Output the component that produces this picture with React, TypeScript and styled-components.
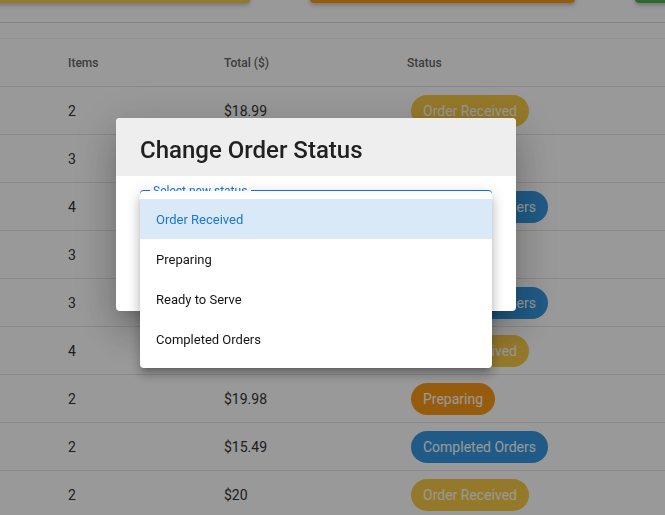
import React from 'react';
import styled, { createGlobalStyle } from 'styled-components';

type Status = 'Order Received' | 'Preparing' | 'Ready to Serve' | 'Completed Orders';

interface OrderRow {
  items: number;
  total: string;
  status: Status;
}

const statusColors: Record<Status, string> = {
  'Order Received': '#f8ca47',
  Preparing: '#fb9a17',
  'Ready to Serve': '#4caf50',
  'Completed Orders': '#3598e0',
};

const rows: OrderRow[] = [
  { items: 2, total: '$18.99', status: 'Order Received' },
  { items: 3, total: '$24.50', status: 'Preparing' },
  { items: 4, total: '$31.97', status: 'Completed Orders' },
  { items: 3, total: '$22.47', status: 'Preparing' },
  { items: 3, total: '$27.99', status: 'Completed Orders' },
  { items: 4, total: '$35.96', status: 'Order Received' },
  { items: 2, total: '$19.98', status: 'Preparing' },
  { items: 2, total: '$15.49', status: 'Completed Orders' },
  { items: 2, total: '$20', status: 'Order Received' },
];

const options: Status[] = ['Order Received', 'Preparing', 'Ready to Serve', 'Completed Orders'];

const GlobalStyle = createGlobalStyle`
  html, body {
    margin: 0;
    background: #ffffff;
    overflow: hidden;
    font-family: Roboto, "Liberation Sans", Arial, sans-serif;
  }
`;

const Page = styled.div`
  width: 665px;
  height: 515px;
  overflow: hidden;
`;

const FilterBar = styled.div`
  display: flex;
  gap: 60px;
  margin: -37px 0 0 -15px;
`;

const FilterButton = styled.div<{ $color: string }>`
  flex: 0 0 265px;
  height: 40px;
  border-radius: 4px;
  background: ${(p) => p.$color};
  box-shadow: 0 2px 4px rgba(0, 0, 0, 0.25);
`;

const TableTop = styled.div`
  margin-top: 19px;
  height: 15px;
  border-top: 1px solid #dcdcdc;
  border-bottom: 1px solid #f3f3f3;
`;

const Row = styled.div`
  display: grid;
  grid-template-columns: 156px 183px 1fr;
  align-items: center;
  height: 47px;
  padding-left: 52px;
  border-bottom: 1px solid #e4e4e4;
`;

const HeadCell = styled.div`
  padding-left: 16px;
  font-size: 12px;
  font-weight: 500;
  color: #666666;
`;

const Cell = styled.div`
  padding-left: 16px;
  font-size: 14px;
  color: #333333;
`;

const Badge = styled.span<{ $color: string }>`
  display: inline-flex;
  align-items: center;
  height: 32px;
  margin-left: 4px;
  padding: 0 12px;
  border-radius: 16px;
  background: ${(p) => p.$color};
  color: #ffffff;
  font-size: 14px;
`;

const Backdrop = styled.div`
  position: fixed;
  inset: 0;
  background: rgba(0, 0, 0, 0.4);
  display: flex;
  align-items: flex-start;
  padding: 118px 0 0 116px;
`;

const Dialog = styled.div`
  width: 400px;
  background: #ffffff;
  border-radius: 4px;
  box-shadow: 0 11px 15px -7px rgba(0, 0, 0, 0.2), 0 24px 38px 3px rgba(0, 0, 0, 0.14),
    0 9px 46px 8px rgba(0, 0, 0, 0.12);
`;

const DialogTitle = styled.h2`
  margin: 0;
  padding: 19px 24px 13px;
  height: 26px;
  line-height: 26px;
  background: #eeeeee;
  border-radius: 4px 4px 0 0;
  font-size: 24px;
  font-weight: 500;
  color: #212121;
`;

const DialogBody = styled.div`
  padding: 14px 24px 12px;
`;

const SelectField = styled.div`
  position: relative;
  height: 52px;
  border: 2px solid #1976d2;
  border-radius: 4px;
`;

const FieldLabel = styled.span`
  position: absolute;
  top: -9px;
  left: 8px;
  padding: 0 4px 0 3px;
  background: #ffffff;
  font-size: 12px;
  line-height: 16px;
  color: #1976d2;
`;

const Menu = styled.ul`
  position: absolute;
  top: -1px;
  left: -2px;
  right: -2px;
  margin: 0;
  padding: 8px 0 9px;
  list-style: none;
  background: #ffffff;
  border-radius: 4px;
  box-shadow: 0 5px 5px -3px rgba(0, 0, 0, 0.2), 0 8px 10px 1px rgba(0, 0, 0, 0.14),
    0 3px 14px 2px rgba(0, 0, 0, 0.12);
  z-index: 2;
`;

const MenuItem = styled.li<{ $selected?: boolean }>`
  display: flex;
  align-items: center;
  height: 40px;
  padding: 0 16px;
  font-size: 13px;
  font-weight: 400;
  color: ${(p) => (p.$selected ? '#1976d2' : 'rgba(0, 0, 0, 0.92)')};
  background: ${(p) => (p.$selected ? 'rgba(25, 118, 210, 0.16)' : 'transparent')};
`;

const DialogActions = styled.div`
  display: flex;
  justify-content: flex-end;
  gap: 8px;
  padding: 8px 24px 9px;
`;

const TextButton = styled.button`
  height: 36px;
  padding: 0 8px;
  border: none;
  background: none;
  font-family: inherit;
  font-size: 14px;
  font-weight: 500;
  color: #1976d2;
  text-transform: uppercase;
`;

export default function App() {
  return (
    <Page>
      <GlobalStyle />
      <FilterBar>
        <FilterButton $color="#f8ca47" />
        <FilterButton $color="#fb9a17" />
        <FilterButton $color="#4caf50" />
      </FilterBar>
      <TableTop />
      <Row>
        <HeadCell>Items</HeadCell>
        <HeadCell>Total ($)</HeadCell>
        <HeadCell>Status</HeadCell>
      </Row>
      {rows.map((r, i) => (
        <Row key={i}>
          <Cell>{r.items}</Cell>
          <Cell>{r.total}</Cell>
          <Cell>
            <Badge $color={statusColors[r.status]}>{r.status}</Badge>
          </Cell>
        </Row>
      ))}
      <Backdrop>
        <Dialog>
          <DialogTitle>Change Order Status</DialogTitle>
          <DialogBody>
            <SelectField>
              <FieldLabel>Select new status</FieldLabel>
              <Menu>
                {options.map((o) => (
                  <MenuItem key={o} $selected={o === 'Order Received'}>
                    {o}
                  </MenuItem>
                ))}
              </Menu>
            </SelectField>
          </DialogBody>
          <DialogActions>
            <TextButton>Cancel</TextButton>
            <TextButton>Update</TextButton>
          </DialogActions>
        </Dialog>
      </Backdrop>
    </Page>
  );
}
